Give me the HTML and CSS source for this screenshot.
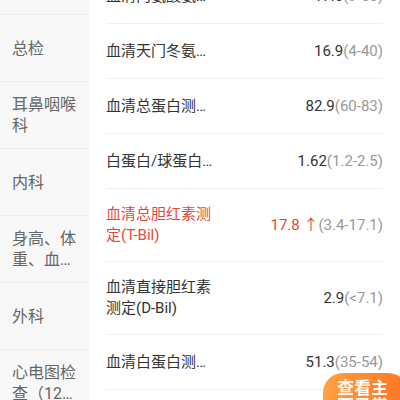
FILE: index.html
```html
<!DOCTYPE html>
<html lang="zh-CN">
<head>
    <meta charset="UTF-8">
    <meta name="viewport" content="width=device-width, initial-scale=1.0">
    <title>体检报告</title>
    <link rel="stylesheet" href="styles.css">
</head>
<body>
    <div class="page">
        <!-- 左侧科室列表 -->
        <div class="sidebar">
            <div class="sidebar-list">
                <div class="dept"><span>一般检查</span></div>
                <div class="dept"><span>总检</span></div>
                <div class="dept"><span>耳鼻咽喉科</span></div>
                <div class="dept"><span>内科</span></div>
                <div class="dept"><span>身高、体重、血压、腰围</span></div>
                <div class="dept"><span>外科</span></div>
                <div class="dept"><span>心电图检查（12导联）</span></div>
            </div>
        </div>

        <!-- 右侧检查项目 -->
        <div class="content">
            <div class="rows">
                <div class="row">
                    <div class="name single">血清丙氨酸氨基转移酶测定</div>
                    <div class="value">17.0<span class="range">(9-50)</span></div>
                </div>
                <div class="row">
                    <div class="name single">血清天门冬氨酸氨基转移酶测定</div>
                    <div class="value">16.9<span class="range">(4-40)</span></div>
                </div>
                <div class="row">
                    <div class="name single">血清总蛋白测定(TP)</div>
                    <div class="value">82.9<span class="range">(60-83)</span></div>
                </div>
                <div class="row">
                    <div class="name single">白蛋白/球蛋白比值</div>
                    <div class="value">1.62<span class="range">(1.2-2.5)</span></div>
                </div>
                <div class="row abnormal">
                    <div class="name">血清总胆红素测定(T-Bil)</div>
                    <div class="value">17.8 ↑<span class="range">(3.4-17.1)</span></div>
                </div>
                <div class="row">
                    <div class="name">血清直接胆红素测定(D-Bil)</div>
                    <div class="value">2.9<span class="range">(&lt;7.1)</span></div>
                </div>
                <div class="row">
                    <div class="name single">血清白蛋白测定(ALB)</div>
                    <div class="value">51.3<span class="range">(35-54)</span></div>
                </div>
                <div class="row">
                    <div class="name single">血清球蛋白测定</div>
                    <div class="value">31.6<span class="range">(20-40)</span></div>
                </div>
            </div>
        </div>
    </div>

    <div class="float-button">查看主要异常</div>
</body>
</html>
```

FILE: styles.css
```css
body {
    margin: 0;
    padding: 0;
    overflow: hidden;
    background-color: #fff;
    font-family: Roboto, 'Noto Sans CJK SC', sans-serif;
}

.page {
    display: flex;
    height: 100vh;
    overflow: hidden;
}

.sidebar {
    flex: none;
    width: 89px;
    background-color: #f8f8f8;
}

/* 列表已向上滚动 */
.sidebar-list {
    margin-top: -52px;
}

.dept {
    display: flex;
    align-items: center;
    height: 66px;
    padding: 0 12px;
    border-bottom: 1px solid #eeeeee;
    color: #666;
    font-size: 16px;
    line-height: 21px;
}

.dept span {
    display: -webkit-box;
    -webkit-box-orient: vertical;
    -webkit-line-clamp: 2;
    overflow: hidden;
}

.content {
    flex: 1;
    padding: 0 17px;
}

.rows {
    margin-top: -31px;
}

.row {
    display: flex;
    align-items: center;
    min-height: 24px;
    padding: 15px 0;
    border-bottom: 1px solid #f0f0f0;
    color: #333;
    font-size: 15px;
    line-height: 21px;
}

.name {
    width: 112px;
}

.name.single {
    white-space: nowrap;
    overflow: hidden;
    text-overflow: ellipsis;
}

.value {
    margin-left: auto;
    white-space: nowrap;
}

.range {
    color: #999;
}

.row.abnormal .name,
.row.abnormal .value {
    color: #e8483a;
}

.row.abnormal .range {
    color: #999;
}

.float-button {
    position: fixed;
    right: -8px;
    bottom: -25px;
    width: 51px;
    padding: 6px 20px 10px 14px;
    border-radius: 20px;
    background: linear-gradient(90deg, #ffa242, #ff7424);
    color: #fff;
    font-size: 17px;
    font-weight: bold;
    line-height: 18px;
}
```
